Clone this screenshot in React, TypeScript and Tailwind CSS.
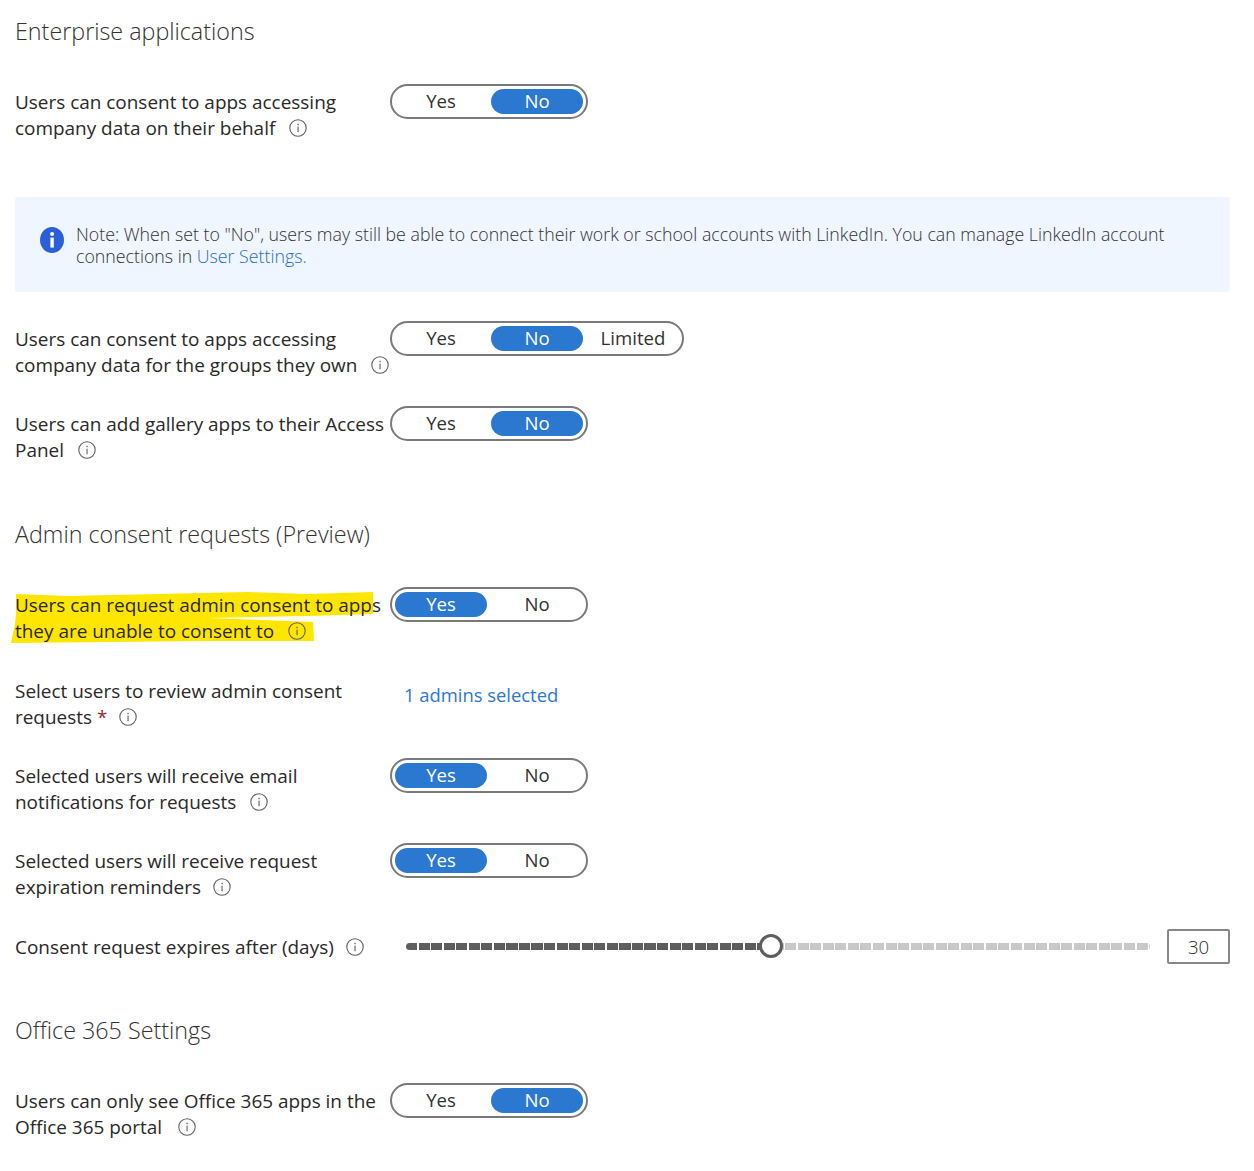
import React from 'react';

const Info: React.FC<{ className?: string }> = ({ className = '' }) => (
  <svg width="18" height="18" viewBox="0 0 18 18" className={`inline-block shrink-0 ${className}`}>
    <circle cx="9" cy="9" r="8.2" fill="none" stroke="#605e5c" strokeWidth="1.1" />
    <rect x="8.5" y="7.6" width="1.1" height="5.6" fill="#605e5c" />
    <rect x="8.4" y="4.8" width="1.3" height="1.4" fill="#605e5c" />
  </svg>
);

const Toggle: React.FC<{ options: string[]; active: string }> = ({ options, active }) => (
  <div className="h-[35px] shrink-0 rounded-full border-2 border-[#7a7a7a] bg-white flex items-center px-[3px] text-[18.6px] text-[#323130]">
    {options.map((o) => (
      <div
        key={o}
        className={
          o === active
            ? 'w-[92px] h-[25px] pb-[2px] mr-[4px] last:mr-0 rounded-full bg-[#2b78d0] text-white font-medium flex items-center justify-center'
            : 'w-[92px] h-[25px] pb-[2px] mr-[4px] last:mr-0 flex items-center justify-center'
        }
      >
        {o}
      </div>
    ))}
  </div>
);

const Row: React.FC<{ label: React.ReactNode; children: React.ReactNode; className?: string }> = ({ label, children, className = '' }) => (
  <div className={`flex items-start ${className}`}>
    <div className="w-[375px] shrink-0 pt-[5px] text-[18.95px] font-[450] leading-[26px] whitespace-nowrap">{label}</div>
    {children}
  </div>
);

const Heading: React.FC<{ children: React.ReactNode; className?: string }> = ({ children, className = '' }) => (
  <h2 className={`text-[23.3px] leading-[30px] font-light text-[#323130] ${className}`}>{children}</h2>
);

export default function App() {
  return (
    <div className="w-[1254px] h-[1171px] bg-white px-[15px] pt-[16px] text-[#292827] font-['Open_Sans',sans-serif] overflow-hidden">
      <Heading>Enterprise applications</Heading>

      <Row className="mt-[38px]" label={<>Users can consent to apps accessing<br />company data on their behalf <Info className="ml-[9px] -mt-[3px] align-middle" /></>}>
        <Toggle options={['Yes', 'No']} active="No" />
      </Row>

      <div className="mt-[56px] w-[1215px] h-[95px] rounded-[2px] bg-[#f0f6ff] flex items-center pl-[25px]">
        <svg width="24" height="26" viewBox="0 0 24 26" className="shrink-0 -mt-[10px]">
          <ellipse cx="12" cy="13" rx="12" ry="13" fill="#2a5fd8" />
          <rect x="10.4" y="10.6" width="3.4" height="10" fill="#fff" />
          <circle cx="12.1" cy="7" r="2" fill="#fff" />
        </svg>
        <p className="ml-[12px] text-[17.75px] leading-[22px] font-light text-[#323130] whitespace-nowrap">
          Note: When set to "No", users may still be able to connect their work or school accounts with LinkedIn. You can manage LinkedIn account
          <br />
          connections in <span className="text-[#1f6fc4]">User Settings.</span>
        </p>
      </div>

      <Row className="mt-[29px]" label={<>Users can consent to apps accessing<br />company data for the groups they own <Info className="ml-[9px] -mt-[3px] align-middle" /></>}>
        <Toggle options={['Yes', 'No', 'Limited']} active="No" />
      </Row>

      <Row className="mt-[28px]" label={<>Users can add gallery apps to their Access<br />Panel <Info className="ml-[9px] -mt-[3px] align-middle" /></>}>
        <Toggle options={['Yes', 'No']} active="No" />
      </Row>

      <Heading className="mt-[56px]">Admin consent requests (Preview)</Heading>

      <div className="relative mt-[38px]">
        <svg width="380" height="60" viewBox="0 0 380 60" className="absolute left-[-7px] top-[1px]">
          <path d="M8 6 L60 8 L150 6 L240 4 L300 6 L365 4 L365 26 L300 28 L200 30 L305 34 L306 53 L200 53 L100 54 L3 55 L7 36 L8 26 Z" fill="#ffe600" />
        </svg>
        <Row className="relative" label={<>Users can request admin consent to apps<br />they are unable to consent to <Info className="ml-[9px] -mt-[3px] align-middle" /></>}>
          <Toggle options={['Yes', 'No']} active="Yes" />
        </Row>
      </div>

      <Row className="mt-[29px]" label={<>Select users to review admin consent<br />requests <span className="text-[#a4262c]">*</span> <Info className="ml-[7px] -mt-[3px] align-middle" /></>}>
        <div className="pl-[14px] pt-[9px] text-[18.4px] leading-[26px] text-[#2b78d0]">1 admins selected</div>
      </Row>

      <Row className="mt-[28px]" label={<>Selected users will receive email<br />notifications for requests <Info className="ml-[9px] -mt-[3px] align-middle" /></>}>
        <Toggle options={['Yes', 'No']} active="Yes" />
      </Row>

      <Row className="mt-[28px]" label={<>Selected users will receive request<br />expiration reminders <Info className="ml-[7px] -mt-[3px] align-middle" /></>}>
        <Toggle options={['Yes', 'No']} active="Yes" />
      </Row>

      <div className="mt-[29px] flex items-center h-[35px]">
        <div className="w-[391px] shrink-0 text-[18.95px] font-[450] leading-[26px] whitespace-nowrap">
          Consent request expires after (days) <Info className="ml-[7px] -mt-[3px] align-middle" />
        </div>
        <div className="relative w-[744px] h-[7px] shrink-0 flex">
          <div className="w-[354px] h-full rounded-l-full bg-[repeating-linear-gradient(90deg,#5e5e5e_0,#5e5e5e_11.2px,#fff_11.2px,#fff_12.55px)]" />
          <div className="flex-1 h-full rounded-r-full bg-[repeating-linear-gradient(90deg,#c8c8c8_0,#c8c8c8_11px,#fff_11px,#fff_12.55px)]" />
          <div className="absolute left-[353px] top-[-9px] w-[24px] h-[24px] rounded-full border-[3px] border-[#5e5e5e] bg-white" />
        </div>
        <div className="ml-[17px] w-[63px] h-[35px] rounded-[2px] border-2 border-[#8a8886] flex items-center justify-center text-[18.6px] font-light">30</div>
      </div>

      <Heading className="mt-[51px]">Office 365 Settings</Heading>

      <Row className="mt-[38px]" label={<>Users can only see Office 365 apps in the<br />Office 365 portal <Info className="ml-[11px] -mt-[3px] align-middle" /></>}>
        <Toggle options={['Yes', 'No']} active="No" />
      </Row>
    </div>
  );
}
